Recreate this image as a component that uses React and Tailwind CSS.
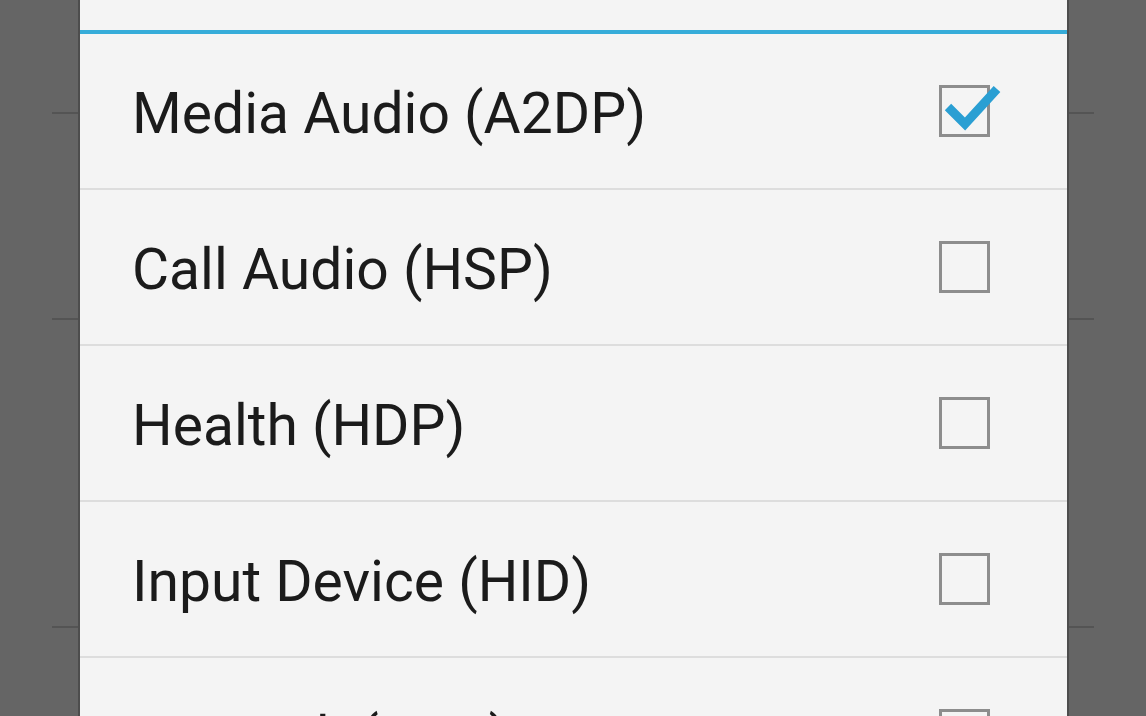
import { useState } from 'react';

const profiles = [
  { id: 'a2dp', label: 'Media Audio (A2DP)', checked: true },
  { id: 'hsp', label: 'Call Audio (HSP)', checked: false },
  { id: 'hdp', label: 'Health (HDP)', checked: false },
  { id: 'hid', label: 'Input Device (HID)', checked: false },
  { id: 'pan', label: 'Network (PAN)', checked: false },
];

function CheckBox({ checked }) {
  return (
    <div className="relative w-[51px] h-[52px] border-[3px] border-[#8d8d8d] shrink-0">
      {checked && (
        <svg
          className="absolute -left-[3px] -top-[3px] overflow-visible"
          width="64"
          height="44"
          viewBox="0 0 64 44"
        >
          <path
            d="M9 22 L26 39 L58 4"
            fill="none"
            stroke="#2a9fd3"
            strokeWidth="9"
            strokeLinejoin="miter"
          />
        </svg>
      )}
    </div>
  );
}

export default function App() {
  const [items, setItems] = useState(profiles);

  const toggle = (id) =>
    setItems((prev) => prev.map((p) => (p.id === id ? { ...p, checked: !p.checked } : p)));

  return (
    <div
      className="relative w-[1146px] h-[716px] overflow-hidden bg-[#656565]"
      style={{ fontFamily: 'Roboto, "Noto Sans", sans-serif' }}
    >
      {/* list behind the dialog */}
      <div className="flex flex-col pt-[112px] px-[52px]">
        <div className="h-[2px] bg-[#545454]" />
        <div className="h-[204px]" />
        <div className="h-[2px] bg-[#545454]" />
        <div className="h-[306px]" />
        <div className="h-[2px] bg-[#545454]" />
      </div>

      {/* dialog */}
      <div className="absolute top-0 bottom-0 left-[80px] w-[987px] bg-[#f4f4f4] shadow-[0_0_0_2px_#4d4d4d] flex flex-col">
        <div className="h-[30px] shrink-0" />
        <div className="h-[4px] bg-[#36acd9] shrink-0" />
        {items.map((p, i) => (
          <div key={p.id} className="flex flex-col shrink-0">
            {i > 0 && <div className="h-[2px] bg-[#dddddd]" />}
            <button
              onClick={() => toggle(p.id)}
              className="h-[154px] flex items-center justify-between pl-[52px] pr-[77px] text-left"
            >
              <span className="text-[57px] text-[#1b1b1b] pt-[5px]">{p.label}</span>
              <CheckBox checked={p.checked} />
            </button>
          </div>
        ))}
      </div>
    </div>
  );
}
